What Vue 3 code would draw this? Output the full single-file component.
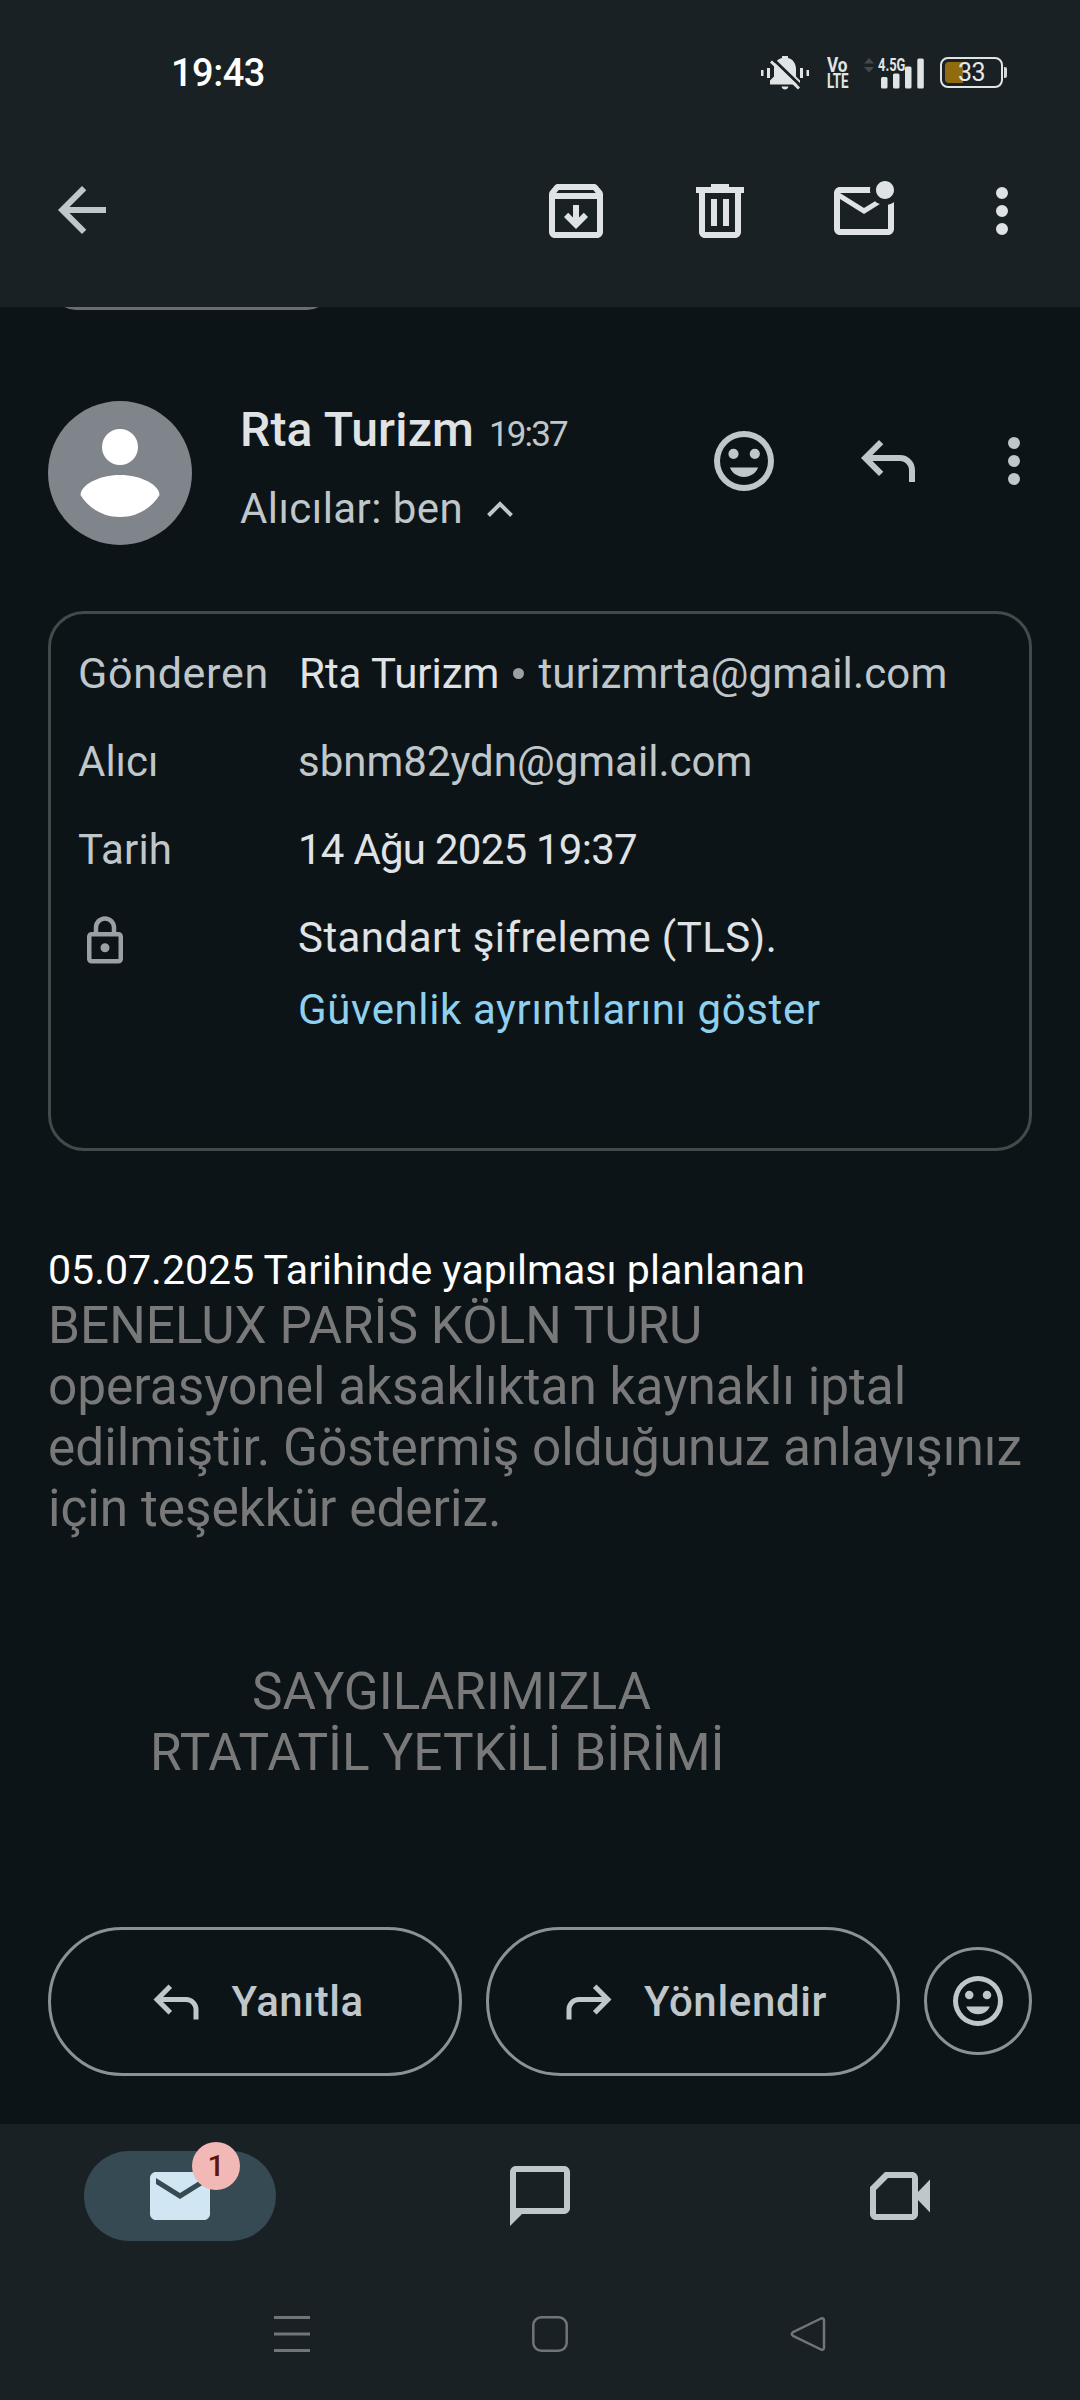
<script setup>
const paths = {
  back: 'M7.83 13l5.6 5.6L12 20l-8-8 8-8 1.43 1.4L7.83 11H20v2z',
  archive:
    'M20.54 5.23l-1.39-1.68C18.88 3.21 18.47 3 18 3H6c-.47 0-.88.21-1.16.55L3.46 5.23C3.17 5.57 3 6.02 3 6.5V19c0 1.1.9 2 2 2h14c1.1 0 2-.9 2-2V6.5c0-.48-.17-.93-.46-1.27zM6.24 5h11.52l.83 1H5.42zM5 19V8h14v11zM11 10h2v4.2l1.6-1.6L16 14l-4 4-4-4 1.4-1.4 1.6 1.6z',
  trash:
    'M7 21c-.55 0-1.02-.2-1.41-.59C5.2 20.02 5 19.55 5 19V6H4V4h5V3h6v1h5v2h-1v13c0 .55-.2 1.02-.59 1.41-.39.39-.86.59-1.41.59zM17 6H7v13h10zM9 17h2V8H9zm4 0h2V8h-2z',
  unread:
    'M22 8.98V18c0 1.1-.9 2-2 2H4c-1.1 0-2-.9-2-2V6c0-1.1.9-2 2-2h10.1c-.06.32-.1.66-.1 1s.04.68.1 1H4l8 5 3.67-2.29c.47.43 1.02.76 1.63.98L12 13 4 8v10h16V9.9c.74-.15 1.42-.48 2-.92zM16 5c0 1.66 1.34 3 3 3s3-1.34 3-3-1.34-3-3-3-3 1.34-3 3z',
  more: 'M12 8a2 2 0 1 0 0-4 2 2 0 0 0 0 4zm0 2a2 2 0 1 0 0 4 2 2 0 0 0 0-4zm0 6a2 2 0 1 0 0 4 2 2 0 0 0 0-4z',
  smile:
    'M12 2a10 10 0 1 0 0 20 10 10 0 0 0 0-20zm0 18a8 8 0 1 1 0-16 8 8 0 0 1 0 16zM8.5 7.9a1.7 1.7 0 1 0 0 3.4 1.7 1.7 0 0 0 0-3.4zm7.1 0a1.7 1.7 0 1 0 0 3.4 1.7 1.7 0 0 0 0-3.4zM7.3 14.2c.7 1.9 2.5 3.1 4.7 3.1s4-1.2 4.7-3.1z',
  reply:
    'M19 19v-4c0-.83-.29-1.54-.88-2.12C17.54 12.29 16.83 12 16 12H6.83l3.6 3.6L9 17l-6-6 6-6 1.43 1.4L6.83 10H16c1.38 0 2.56.49 3.54 1.46C20.51 12.44 21 13.63 21 15v4z',
  lock:
    'M6 22c-1.1 0-2-.9-2-2V10c0-1.1.9-2 2-2h1V6c0-2.76 2.24-5 5-5s5 2.24 5 5v2h1c1.1 0 2 .9 2 2v10c0 1.1-.9 2-2 2zM6 20h12V10H6zM12 17a2 2 0 1 0 0-4 2 2 0 0 0 0 4zM9 8h6V6a3 3 0 0 0-6 0z',
  mail: 'M20 4H4c-1.1 0-2 .9-2 2v12c0 1.1.9 2 2 2h16c1.1 0 2-.9 2-2V6c0-1.1-.9-2-2-2zm0 4l-8 5-8-5V6l8 5 8-5z',
  chat: 'M2 22V4c0-1.1.9-2 2-2h16c1.1 0 2 .9 2 2v12c0 1.1-.9 2-2 2H6zM4 16h16V4H4z',
  video:
    'M7 4h9c1.1 0 2 .9 2 2v4.7l4-4.2v11l-4-4.2V18c0 1.1-.9 2-2 2H4c-1.1 0-2-.9-2-2V9zM8 6l-4 4v8h12V6z'
}
const toolbar = ['archive', 'trash', 'unread']
</script>

<template>
  <div class="screen">
    <header class="top">
      <div class="status">
        <span class="clock">19:43</span>
        <div class="indicators">
          <svg class="bell" width="48" height="34" viewBox="0 0 48 34">
            <path
              fill="#e0e4e5"
              d="M9 28.5v-4l4-4V13c0-6 3.5-10 8-11V0h6v2c4.5 1 8 5 8 11v7.5l4 4v4zM20.5 30.5h7c-.5 2-1.8 3-3.5 3s-3-1-3.5-3zM0 14h2.5v6H0zM6 12h3v10H6zM39 12h3v10h-3zM45.5 14H48v6h-2.500z"
            />
            <path stroke="#1a2124" stroke-width="3" d="M12.5 3.5l28 27" />
            <path stroke="#e0e4e5" stroke-width="3" d="M10 5.5l28 27" />
          </svg>
          <div class="volte"><span>Vo</span><span>LTE</span></div>
          <div class="signal">
            <svg width="62" height="32" viewBox="0 0 62 32">
              <path fill="#43494c" d="M2 6.5L7 1l5 5.5zM2 10h10l-5 5.5z" />
              <g fill="#e0e4e5">
                <rect x="19" y="20" width="6.5" height="11.5" rx="1.5" />
                <rect x="31" y="16.5" width="6.5" height="15" rx="1.5" />
                <rect x="43" y="9.5" width="6.5" height="22" rx="1.5" />
                <rect x="55.3" y="1.5" width="6.5" height="30" rx="1.5" />
              </g>
            </svg>
            <span class="gen">4.5G</span>
          </div>
          <div class="battery">
            <span class="charge"></span>
            <span class="level">33</span>
          </div>
          <span class="cap"></span>
        </div>
      </div>
      <div class="bar">
        <svg class="ic back" viewBox="0 0 24 24"><path :d="paths.back" /></svg>
        <svg v-for="t in toolbar" :key="t" class="ic tool" viewBox="0 0 24 24"><path :d="paths[t]" /></svg>
        <svg class="ic tool last" viewBox="0 0 24 24"><path :d="paths.more" /></svg>
      </div>
    </header>

    <div class="peek"><div class="chip"></div></div>

    <section class="sender">
      <svg class="avatar" viewBox="0 0 144 144">
        <circle cx="72" cy="72" r="72" fill="#80858b" />
        <circle cx="72" cy="46" r="18" fill="#fff" />
        <path fill="#fff" d="M32.5 94C32.5 84 51 74 72 74s39.5 10 39.5 20C103 107.5 89 116 72 116s-31-8.5-39.5-22z" />
      </svg>
      <div class="who">
        <div class="line1"><span class="name">Rta Turizm</span><span class="time">19:37</span></div>
        <div class="line2">
          <span class="to">Alıcılar: ben</span>
          <svg width="28" height="18" viewBox="0 0 28 18">
            <path fill="none" stroke="#c0c7ca" stroke-width="4" d="M2.5 15.5L14 4l11.5 11.5" />
          </svg>
        </div>
      </div>
      <svg class="ic act smile" viewBox="0 0 24 24"><path :d="paths.smile" /></svg>
      <svg class="ic act rep" viewBox="0 0 24 24"><path :d="paths.reply" /></svg>
      <svg class="ic act dots" viewBox="0 0 24 24"><path :d="paths.more" /></svg>
    </section>

    <section class="card">
      <div class="row">
        <span class="label gon">Gönderen</span>
        <span class="strong from">Rta Turizm</span><i class="bullet"></i><span class="mail1">turizmrta@gmail.com</span>
      </div>
      <div class="row"><span class="label">Alıcı</span><span class="mail2">sbnm82ydn@gmail.com</span></div>
      <div class="row"><span class="label tarih">Tarih</span><span class="strong date">14 Ağu 2025 19:37</span></div>
      <div class="secure">
        <div class="label"><svg class="lock" viewBox="0 0 24 24"><path :d="paths.lock" /></svg></div>
        <div class="tls">
          <span class="strong std">Standart şifreleme (TLS).</span>
          <a class="link">Güvenlik ayrıntılarını göster</a>
        </div>
      </div>
    </section>

    <article class="message">
      <p class="lead">05.07.2025 Tarihinde yapılması planlanan</p>
      <p>BENELUX PARİS KÖLN TURU</p>
      <p>operasyonel aksaklıktan kaynaklı iptal</p>
      <p>edilmiştir. Göstermiş olduğunuz anlayışınız</p>
      <p>için teşekkür ederiz.</p>
      <p class="sign first">SAYGILARIMIZLA</p>
      <p class="sign second">RTATATİL YETKİLİ BİRİMİ</p>
    </article>

    <div class="actions">
      <button class="btn">
        <svg viewBox="0 0 24 24"><path :d="paths.reply" /></svg><span class="yan">Yanıtla</span>
      </button>
      <button class="btn">
        <svg class="flip" viewBox="0 0 24 24"><path :d="paths.reply" /></svg><span class="yon">Yönlendir</span>
      </button>
      <button class="btn round"><svg viewBox="0 0 24 24"><path :d="paths.smile" /></svg></button>
    </div>

    <footer class="bottom">
      <nav class="tabs">
        <div class="tab">
          <div class="pill">
            <svg class="ic" viewBox="0 0 24 24"><path :d="paths.mail" /></svg>
            <span class="badge">1</span>
          </div>
        </div>
        <div class="tab"><svg class="ic" viewBox="0 0 24 24"><path :d="paths.chat" /></svg></div>
        <div class="tab"><svg class="ic" viewBox="0 0 24 24"><path :d="paths.video" /></svg></div>
      </nav>
      <div class="system">
        <svg width="36" height="36" viewBox="0 0 36 36"><path fill="#707578" d="M0 0h36v3H0zM0 16.5h36v3H0zM0 33h36v3H0z" /></svg>
        <svg width="36" height="36" viewBox="0 0 36 36">
          <rect x="1.3" y="1.3" width="33.4" height="33.4" rx="8" fill="none" stroke="#707578" stroke-width="2.5" />
        </svg>
        <svg width="36" height="36" viewBox="0 0 36 36">
          <path
            fill="none"
            stroke="#707578"
            stroke-width="2.5"
            stroke-linejoin="round"
            d="M31 2.5L3 16.2q-2.5 1.8 0 3.6L31 33.5q3 1 3-2v-27q0-3-3-2z"
          />
        </svg>
      </div>
    </footer>
  </div>
</template>

<style>
body {
  background: #0c1417;
}
</style>

<style scoped>
.screen {
  width: 1080px;
  height: 2400px;
  overflow: hidden;
  display: flex;
  flex-direction: column;
  background: #0c1417;
  color: #c0c7ca;
  font-family: Roboto, "Liberation Sans", sans-serif;
  font-size: 42px;
  box-sizing: border-box;
  white-space: nowrap;
}
svg {
  display: block;
  flex: none;
}
.ic {
  width: 72px;
  height: 72px;
  fill: #c0c7ca;
}
.top {
  height: 307px;
  flex: none;
  background: #1a2124;
}
.status {
  height: 145px;
  padding: 0 73px 0 171px;
  display: flex;
  align-items: center;
  justify-content: space-between;
}
.clock {
  font-size: 38px;
  font-weight: 500;
  color: #fff;
  letter-spacing: -0.5px;
}
.indicators {
  display: flex;
  align-items: center;
}
.bell {
  margin-right: 18px;
}
.volte {
  width: 22px;
  margin-right: 13px;
  display: flex;
  flex-direction: column;
  font: 700 20px/16px Roboto, sans-serif;
  color: #e0e4e5;
}
.volte span {
  width: max-content;
  transform: scaleX(0.67);
  transform-origin: left;
}
.volte span:first-child {
  transform: scaleX(0.86);
}
.signal {
  position: relative;
  margin-right: 16px;
}
.gen {
  position: absolute;
  left: 16px;
  top: 0;
  font-size: 19px;
  line-height: 16px;
  font-weight: 700;
  color: #e0e4e5;
  transform: scaleX(0.68);
  transform-origin: left;
}
.battery {
  width: 63px;
  height: 31px;
  box-sizing: border-box;
  border: 2.5px solid #e0e4e5;
  border-radius: 8px;
  padding: 3px;
  display: flex;
  position: relative;
}
.charge {
  width: 18px;
  border-radius: 4px 0 0 4px;
  background: #916b10;
}
.level {
  position: absolute;
  inset: 0;
  text-align: center;
  font-size: 25px;
  line-height: 27px;
  color: #e6e8e8;
  letter-spacing: -0.5px;
}
.cap {
  width: 3px;
  height: 11px;
  margin-left: 1px;
  border-radius: 0 2px 2px 0;
  background: #d5d9da;
}
.bar {
  display: flex;
  align-items: center;
  height: 132px;
  padding: 0 42px 0 46px;
}
.back {
  margin-right: auto;
  margin-bottom: 2px;
}
.tool {
  fill: #e0e3e5;
  margin-left: 72px;
}
.tool.last {
  margin-left: 66px;
}
.peek {
  height: 3px;
  flex: none;
  overflow: hidden;
  display: flex;
  align-items: flex-end;
  padding-left: 52px;
}
.chip {
  width: 279px;
  height: 60px;
  flex: none;
  box-sizing: border-box;
  border: 3px solid #686e70;
  border-radius: 24px;
}
.sender {
  display: flex;
  height: 144px;
  flex: none;
  margin-top: 91px;
  padding: 0 30px 0 48px;
}
.avatar {
  width: 144px;
  height: 144px;
}
.who {
  margin-left: 48px;
  flex: 1;
}
.line1 {
  height: 66px;
  line-height: 58px;
  display: flex;
  align-items: baseline;
}
.name {
  font-size: 48px;
  font-weight: 500;
  color: #e0e3e5;
  letter-spacing: 0.2px;
}
.time {
  font-size: 35px;
  margin-left: 15px;
  letter-spacing: -1.9px;
}
.line2 {
  display: flex;
  align-items: center;
  height: 82px;
  gap: 23px;
}
.to {
  letter-spacing: 0.45px;
}
.line2 svg {
  margin-top: 2px;
}
.act {
  margin-top: 24px;
}
.rep {
  margin-left: 72px;
}
.dots {
  margin-left: 54px;
}
.card {
  margin: 66px 48px 0;
  height: 540px;
  flex: none;
  box-sizing: border-box;
  border: 3px solid #434a4c;
  border-radius: 36px;
  padding: 15px 0 0 27px;
}
.row {
  display: flex;
  align-items: center;
  height: 88px;
}
.label {
  width: 220px;
  flex: none;
}
.gon {
  font-size: 43px;
  letter-spacing: 0.7px;
}
.tarih {
  letter-spacing: 0.2px;
}
.strong {
  color: #e0e3e5;
}
.from {
  margin-left: 1px;
}
.bullet {
  width: 11px;
  height: 11px;
  border-radius: 50%;
  background: #9aa0a3;
  margin: 0 14px 0 14px;
}
.mail1 {
  letter-spacing: 0.15px;
}
.date {
  letter-spacing: -0.75px;
}
.secure {
  display: flex;
  padding-top: 9px;
}
.lock {
  width: 54px;
  height: 54px;
  margin-top: 12px;
  fill: #9aa0a4;
}
.tls {
  display: flex;
  flex-direction: column;
  line-height: 72px;
}
.std {
  letter-spacing: 0.45px;
}
.link {
  color: #8ed0ee;
  letter-spacing: 0.61px;
}
.message {
  margin: 94px 48px 0;
  height: 604px;
  flex: none;
  color: #797979;
  font-size: 51.35px;
  line-height: 61px;
}
.message p {
  margin: 0;
}
.message .lead {
  color: #fff;
  font-size: 41.05px;
  line-height: 50px;
}
.message .first {
  margin: 122px 0 0 204px;
}
.message .second {
  margin-left: 102px;
}
.actions {
  display: flex;
  align-items: center;
  gap: 24px;
  height: 149px;
  flex: none;
  margin: 78px 48px 0;
}
.btn {
  flex: 1;
  height: 149px;
  box-sizing: border-box;
  border: 3px solid #8a9295;
  border-radius: 75px;
  background: none;
  padding: 0;
  display: flex;
  align-items: center;
  justify-content: center;
  gap: 25px;
  color: #c0c7ca;
  font: 500 42px Roboto, sans-serif;
}
.btn svg {
  width: 60px;
  height: 60px;
  fill: #c0c7ca;
}
.yan {
  letter-spacing: 0.5px;
}
.yon {
  letter-spacing: 0.65px;
}
.btn .flip {
  transform: scaleX(-1);
}
.btn.round {
  flex: none;
  width: 108px;
  height: 108px;
  margin-bottom: 1px;
}
.bottom {
  margin-top: auto;
  height: 276px;
  flex: none;
  background: #1a2124;
}
.tabs {
  display: flex;
  height: 144px;
}
.tab {
  flex: 1;
  display: flex;
  align-items: center;
  justify-content: center;
}
.pill {
  position: relative;
  width: 192px;
  height: 90px;
  border-radius: 45px;
  background: #354a53;
  display: flex;
  align-items: center;
  justify-content: center;
}
.pill .ic {
  fill: #d0e6f2;
}
.badge {
  position: absolute;
  left: 108px;
  top: -9px;
  width: 48px;
  height: 48px;
  border-radius: 50%;
  background: #f2b8b5;
  color: #601410;
  font-size: 30px;
  line-height: 48px;
  font-weight: 500;
  text-align: center;
}
.system {
  display: flex;
  justify-content: space-between;
  padding: 48px 254px 0 274px;
}
</style>
